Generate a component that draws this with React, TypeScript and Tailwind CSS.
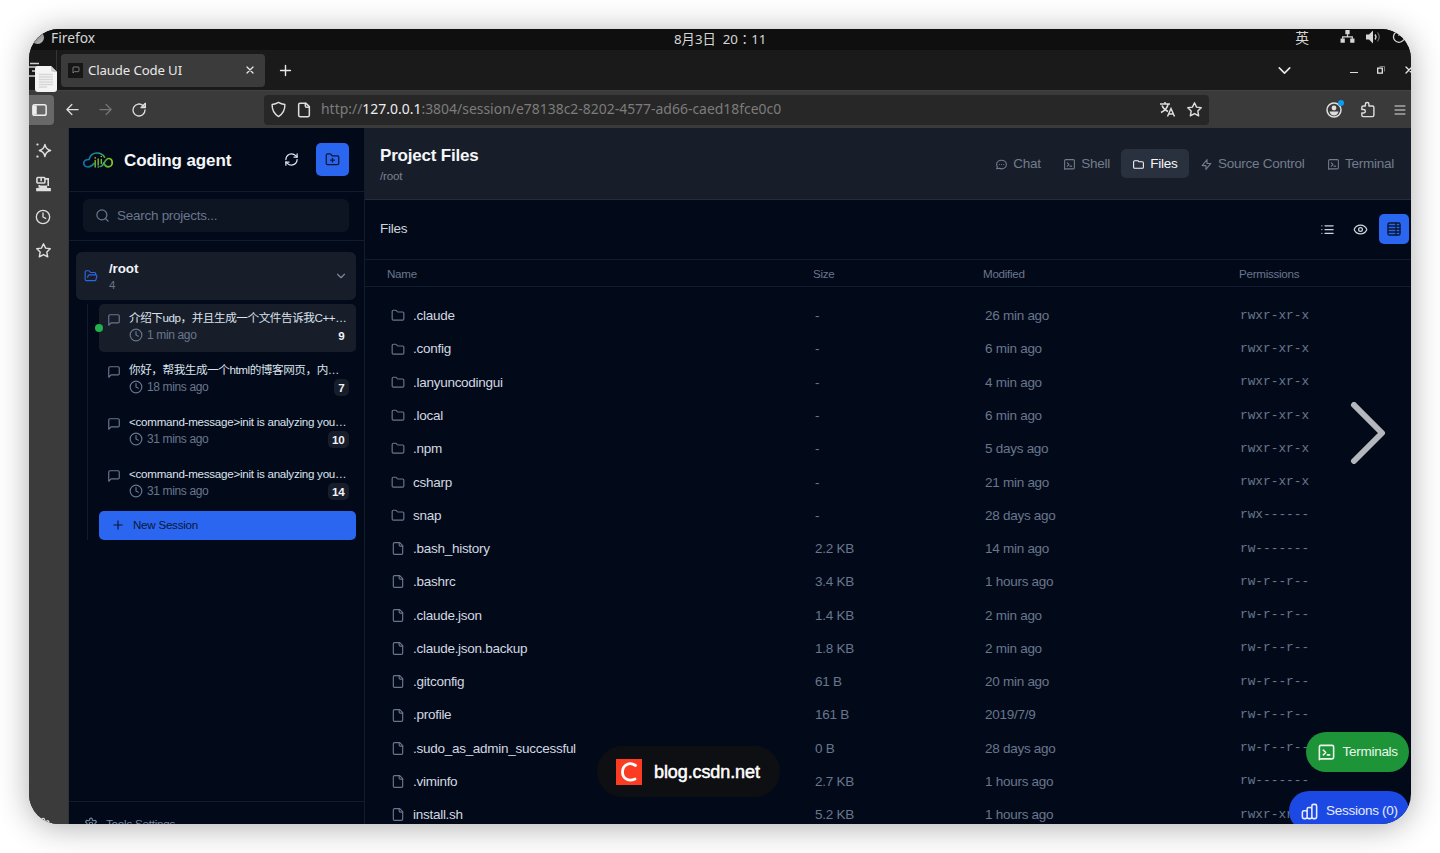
import React, { ReactNode } from "react";

const PATHS = {
	folder: ["M20 20a2 2 0 0 0 2-2V8a2 2 0 0 0-2-2h-7.9a2 2 0 0 1-1.69-.9L9.6 3.9A2 2 0 0 0 7.93 3H4a2 2 0 0 0-2 2v13a2 2 0 0 0 2 2Z"],
	folderPlus: [
		"M20 20a2 2 0 0 0 2-2V8a2 2 0 0 0-2-2h-7.9a2 2 0 0 1-1.69-.9L9.6 3.9A2 2 0 0 0 7.93 3H4a2 2 0 0 0-2 2v13a2 2 0 0 0 2 2Z",
		"M12 10v6M9 13h6",
	],
	folderOpen: [
		"m6 14 1.5-2.9A2 2 0 0 1 9.24 10H20a2 2 0 0 1 1.94 2.5l-1.54 6a2 2 0 0 1-1.95 1.5H4a2 2 0 0 1-2-2V5a2 2 0 0 1 2-2h3.9a2 2 0 0 1 1.69.9l.81 1.2a2 2 0 0 0 1.67.9H18a2 2 0 0 1 2 2v2",
	],
	file: ["M15 2H6a2 2 0 0 0-2 2v16a2 2 0 0 0 2 2h12a2 2 0 0 0 2-2V7Z", "M14 2v4a2 2 0 0 0 2 2h4"],
	message: ["M21 15a2 2 0 0 1-2 2H7l-4 4V5a2 2 0 0 1 2-2h14a2 2 0 0 1 2 2z"],
	clock: ["M12 2a10 10 0 1 0 0 20a10 10 0 1 0 0-20z", "M12 6v6l4 2"],
	refresh: [
		"M3 12a9 9 0 0 1 9-9 9.75 9.75 0 0 1 6.74 2.74L21 8",
		"M21 3v5h-5",
		"M21 12a9 9 0 0 1-9 9 9.75 9.75 0 0 1-6.74-2.74L3 16",
		"M8 16H3v5",
	],
	search: ["M11 3a8 8 0 1 0 0 16a8 8 0 1 0 0-16z", "m21 21-4.3-4.3"],
	down: ["m6 9 6 6 6-6"],
	plus: ["M5 12h14M12 5v14"],
	close: ["M18 6 6 18M6 6l12 12"],
	list: ["M3 12h.01M3 18h.01M3 6h.01M8 12h13M8 18h13M8 6h13"],
	eye: [
		"M2.06 12.35a1 1 0 0 1 0-.7 10.75 10.75 0 0 1 19.88 0 1 1 0 0 1 0 .7 10.75 10.75 0 0 1-19.88 0",
		"M12 9a3 3 0 1 0 0 6a3 3 0 1 0 0-6z",
	],
	table: ["M5 3h14a2 2 0 0 1 2 2v14a2 2 0 0 1-2 2H5a2 2 0 0 1-2-2V5a2 2 0 0 1 2-2z", "M3 7.5h18M3 12h18M3 16.5h18M15 3v18"],
	chat: [
		"M8 12h.01M12 12h.01M16 12h.01M21 12c0 4.418-4.03 8-9 8a9.863 9.863 0 01-4.255-.949L3 20l1.395-3.72C3.512 15.042 3 13.574 3 12c0-4.418 4.03-8 9-8s9 3.582 9 8z",
	],
	shell: ["M8 9l3 3-3 3m5 0h3M5 20h14a2 2 0 002-2V5a2 2 0 00-2-2H5a2 2 0 00-2 2v16l2-1"],
	tabFolder: ["M3 7v10a2 2 0 002 2h14a2 2 0 002-2V9a2 2 0 00-2-2h-6l-2-2H5a2 2 0 00-2 2z"],
	bolt: ["M13 10V3L4 14h7v7l9-11h-7z"],
	bars: [
		"M9 19v-6a2 2 0 00-2-2H5a2 2 0 00-2 2v6a2 2 0 002 2h2a2 2 0 002-2zm0 0V9a2 2 0 012-2h2a2 2 0 012 2v10m-6 0a2 2 0 002 2h2a2 2 0 002-2m0 0V5a2 2 0 012-2h2a2 2 0 012 2v14a2 2 0 01-2 2h-2a2 2 0 01-2-2z",
	],
	left: ["M21 12H3M11 4l-8 8 8 8"],
	right: ["M3 12h18M13 4l8 8-8 8"],
	reload: ["M21 12a9 9 0 1 1-3-6.7L20.5 7.5", "M21.5 2v6.5H15z"],
	shield: ["M12 2c3 1.8 5.5 2.5 9 3c.3 7-2 12.5-9 17c-7-4.5-9.3-10-9-17c3.5-.5 6-1.2 9-3z"],
	star: ["M12 2.5l2.9 6.1 6.6.9-4.8 4.7 1.2 6.7-5.9-3.2-5.9 3.2 1.2-6.7L2.5 9.5l6.600-.9z"],
	puzzle: ["M9 7V4.5a2.500 2.500 0 0 1 5 0V7h5a2 2 0 0 1 2 2v11a2 2 0 0 1-2 2H6a2 2 0 0 1-2-2v-3h2.500a2.300 2.300 0 0 0 0-5H4V9a2 2 0 0 1 2-2z"],
	menu: ["M2 4h20M2 12h20M2 20h20"],
	sparkle: ["M14 3.5c1 5.500 3 7.500 8 8.500c-5 1-7 3-8 8.500c-1-5.500-3-7.500-8-8.500c5-1 7-3 8-8.500z", "M3 3v1h1V3zM3 20v1h1v-1z"],
	settings: [
		"M12.22 2h-.44a2 2 0 0 0-2 2v.18a2 2 0 0 1-1 1.73l-.43.25a2 2 0 0 1-2 0l-.15-.08a2 2 0 0 0-2.73.73l-.22.38a2 2 0 0 0 .73 2.73l.15.1a2 2 0 0 1 1 1.72v.51a2 2 0 0 1-1 1.74l-.15.09a2 2 0 0 0-.73 2.73l.22.38a2 2 0 0 0 2.73.73l.15-.08a2 2 0 0 1 2 0l.43.25a2 2 0 0 1 1 1.73V20a2 2 0 0 0 2 2h.44a2 2 0 0 0 2-2v-.18a2 2 0 0 1 1-1.73l.43-.25a2 2 0 0 1 2 0l.15.08a2 2 0 0 0 2.73-.73l.22-.39a2 2 0 0 0-.73-2.73l-.15-.08a2 2 0 0 1-1-1.74v-.5a2 2 0 0 1 1-1.74l.15-.09a2 2 0 0 0 .73-2.73l-.22-.38a2 2 0 0 0-2.73-.73l-.15.08a2 2 0 0 1-2 0l-.43-.25a2 2 0 0 1-1-1.73V4a2 2 0 0 0-2-2z",
		"M12 9a3 3 0 1 0 0 6a3 3 0 1 0 0-6z",
	],
};

type IconName = keyof typeof PATHS;

function Icon({ name, className = "", stroke = 2 }: { name: IconName; className?: string; stroke?: number }) {
	return (
		<svg
			viewBox="0 0 24 24"
			fill="none"
			stroke="currentColor"
			strokeWidth={stroke}
			strokeLinecap="round"
			strokeLinejoin="round"
			className={`shrink-0 ${className}`}
		>
			{PATHS[name].map((d) => (
				<path key={d} d={d} />
			))}
		</svg>
	);
}

const FILES: [string, string, string, string][] = [
	[".claude", "-", "26 min ago", "rwxr-xr-x"],
	[".config", "-", "6 min ago", "rwxr-xr-x"],
	[".lanyuncodingui", "-", "4 min ago", "rwxr-xr-x"],
	[".local", "-", "6 min ago", "rwxr-xr-x"],
	[".npm", "-", "5 days ago", "rwxr-xr-x"],
	["csharp", "-", "21 min ago", "rwxr-xr-x"],
	["snap", "-", "28 days ago", "rwx------"],
	[".bash_history", "2.2 KB", "14 min ago", "rw-------"],
	[".bashrc", "3.4 KB", "1 hours ago", "rw-r--r--"],
	[".claude.json", "1.4 KB", "2 min ago", "rw-r--r--"],
	[".claude.json.backup", "1.8 KB", "2 min ago", "rw-r--r--"],
	[".gitconfig", "61 B", "20 min ago", "rw-r--r--"],
	[".profile", "161 B", "2019/7/9", "rw-r--r--"],
	[".sudo_as_admin_successful", "0 B", "28 days ago", "rw-r--r--"],
	[".viminfo", "2.7 KB", "1 hours ago", "rw-------"],
	["install.sh", "5.2 KB", "1 hours ago", "rwxr-xr-x"],
];

const SESSIONS = [
	{ title: "介绍下udp，并且生成一个文件告诉我C++…", time: "1 min ago", count: 9, active: true, cjk: true },
	{ title: "你好，帮我生成一个html的博客网页，内…", time: "18 mins ago", count: 7, cjk: true },
	{ title: "<command-message>init is analyzing you…", time: "31 mins ago", count: 10 },
	{ title: "<command-message>init is analyzing you…", time: "31 mins ago", count: 14 },
];

const TABS: { icon: IconName; label: string; active?: boolean }[] = [
	{ icon: "chat", label: "Chat" },
	{ icon: "shell", label: "Shell" },
	{ icon: "tabFolder", label: "Files", active: true },
	{ icon: "bolt", label: "Source Control" },
	{ icon: "shell", label: "Terminal" },
];

function SystemBar() {
	return (
		<div className="relative flex h-[21px] shrink-0 items-center bg-[#0f0f0f] text-[13.8px] leading-none text-[#d6d6d6]">
			<span className="ml-[2px] h-[13px] w-[13px] -translate-y-[2px] rounded-full bg-linear-to-br from-[#555] to-[#ccc]" />
			<span className="ml-[7px] -translate-y-[2px]">Firefox</span>
			<span className="absolute left-[645px] top-[4px] whitespace-pre text-[13.3px]">8月3日  20∶11</span>
			<span className="ml-auto -translate-y-[2px]">英</span>
			<svg viewBox="0 0 15 14" className="ml-[31px] h-[13px] w-[15px] -translate-y-[3px]" fill="currentColor">
				<path d="M5.2 0h4.6v4.6H5.2zM0 9.2h4.600v4.600H0zM10.400 9.200H15v4.600h-4.600z" />
				<path d="M7.500 4.500v3M2.300 9.500V7.300h10.400v2.200" fill="none" stroke="currentColor" strokeWidth="1.3" />
			</svg>
			<svg viewBox="0 0 15 14" className="ml-[11px] h-[14px] w-[15px] -translate-y-[3px]" fill="none" stroke="currentColor">
				<path d="M0 4.500h3l4-4v13l-4-4H0z" fill="currentColor" stroke="none" />
				<path d="M9 4.500q2 2.500 0 5" strokeWidth="1.3" />
				<path d="M11.500 2.500q3.500 4.500 0 9" strokeWidth="1.1" opacity=".5" />
			</svg>
			<svg viewBox="0 0 14 14" className="ml-[11px] mr-[5px] h-[14px] w-[14px] -translate-y-[3px]" fill="none" stroke="currentColor" strokeWidth="1.3">
				<path d="M4 2.200a5.500 5.500 0 1 0 6 0M7 0v6" />
			</svg>
		</div>
	);
}

function TabStrip() {
	return (
		<div className="flex h-[40px] shrink-0 items-center bg-[#1a1a1a] text-[#e8e8e8]">
			<div className="h-full w-[28px] shrink-0 border-r border-[#353535]">
				<svg viewBox="0 0 14 18" className="mt-[11px] h-[18px] w-[14px]" fill="none" stroke="#cfcfcf" strokeWidth="1.5">
					<path d="M1 2.500h9M0 6h10q2 0 2 2v7H0M3 10h5" />
				</svg>
			</div>
			<div className="ml-[4px] flex h-[33px] w-[204px] items-center rounded bg-[#3b3b3b] pl-[7px] pr-[9px]">
				<span className="flex h-[15px] w-[15px] items-center justify-center bg-[#161616]">
					<Icon name="message" className="h-[8px] w-[8px] text-[#aaa]" />
				</span>
				<span className="ml-[5px] pt-[1px] text-[13.2px] tracking-[-0.12px]">Claude Code UI</span>
				<Icon name="close" stroke={2.5} className="ml-auto h-[12px] w-[12px]" />
			</div>
			<Icon name="plus" className="ml-[12px] h-[17px] w-[17px]" />
			<Icon name="down" stroke={1.8} className="ml-auto h-[21px] w-[21px]" />
			<span className="ml-[55px] mt-[5px] h-px w-[8px] bg-[#ddd]" />
			<svg viewBox="0 0 8 8" className="ml-[19px] h-[8px] w-[8px]" fill="none" stroke="currentColor">
				<path d="M.7 2.200h4.600v5H.7z" strokeWidth="1.3" />
				<path d="M2.500.5h5v5" strokeWidth=".8" opacity=".6" />
			</svg>
			<Icon name="close" stroke={2.5} className="-mr-[4px] ml-[18px] h-[12px] w-[12px]" />
		</div>
	);
}

function NavBar() {
	return (
		<div className="flex h-[38px] shrink-0 items-center border-t border-[#424242] bg-[#3a3a3a] text-[#dedede]">
			<div className="flex h-[30px] w-[25px] items-center rounded-r bg-[#686868]">
				<svg viewBox="0 0 16 13" className="ml-[3px] h-[12px] w-[15px]" fill="none" stroke="#eee" strokeWidth="1.6">
					<rect x=".8" y=".8" width="14.4" height="11.4" rx="2" />
					<path d="M1 1.500h4v10H1z" fill="#eee" stroke="none" />
				</svg>
			</div>
			<Icon name="left" className="ml-[11px] h-[15px] w-[15px]" />
			<Icon name="right" className="ml-[18px] h-[15px] w-[15px] text-[#757575]" />
			<Icon name="reload" className="ml-[18px] h-[16px] w-[16px]" />
			<div className="ml-[117px] flex h-[30px] w-[945px] items-center rounded bg-[#272727]">
				<Icon name="shield" className="ml-[6px] h-[17px] w-[17px]" />
				<Icon name="file" stroke={2.3} className="ml-[9px] h-[16px] w-[16px]" />
				<span className="ml-[9px] whitespace-nowrap text-[13.95px] text-[#7c7c7c]">
					http://<span className="text-[#ededed]">127.0.0.1</span>:3804/session/e78138c2-8202-4577-ad66-caed18fce0c0
				</span>
				<svg viewBox="0 0 16 15" className="ml-auto h-[15px] w-[16px]" fill="none" stroke="currentColor" strokeWidth="1.5">
					<path d="M0 2h10M5 0v2M2 3.500q1.500 4 6 6M8 2.500q-1 5-7 8M7.500 14.500 11 6.500l3.500 8M8.800 12h4.500" />
				</svg>
				<Icon name="star" className="ml-[10px] mr-[6px] h-[17px] w-[17px]" />
			</div>
			<div className="relative ml-[117px]">
				<svg viewBox="0 0 16 16" className="h-[16px] w-[16px]" fill="none" stroke="currentColor" strokeWidth="1.5">
					<circle cx="8" cy="8" r="7" />
					<circle cx="8" cy="6" r="2.4" fill="currentColor" stroke="none" />
					<path d="M3.500 9.500h9q-1 4-4.500 4t-4.500-4z" fill="currentColor" stroke="none" />
				</svg>
				<span className="absolute -right-[2px] -top-[2px] h-[6px] w-[6px] rounded-full bg-[#0d9bf2]" />
			</div>
			<Icon name="puzzle" className="ml-[17px] h-[17px] w-[17px]" />
			<Icon name="menu" className="ml-[18px] h-[12px] w-[12px]" />
		</div>
	);
}

function BrowserRail() {
	return (
		<div className="flex w-[40px] shrink-0 flex-col items-start border-r border-[#333] bg-[#3b3b3b] pl-[6px] pt-[14px] text-[#dedede]">
			<Icon name="sparkle" className="h-[17px] w-[17px]" />
			<svg viewBox="0 0 16 16" className="ml-px mt-[17px] h-[16px] w-[15px]" fill="none" stroke="currentColor" strokeWidth="1.7">
				<rect x="1" y="1" width="8.5" height="6" rx="1" />
				<path d="M9.500 2.500h3.500V10M5.500 1v4M3.500 9v3" />
				<path d="M1 13.200h14v1.600H1zM5 10.500h6V13H5z" fill="currentColor" />
			</svg>
			<Icon name="clock" className="mt-[17px] h-[16px] w-[16px]" />
			<Icon name="star" className="mt-[17px] h-[17px] w-[17px]" />
			<Icon name="settings" className="mb-[-9px] mt-auto h-[16px] w-[16px]" />
		</div>
	);
}

function CloudLogo() {
	return (
		<svg
			viewBox="0 0 30 17"
			className="h-[17px] w-[30px] translate-y-px"
			fill="none"
			strokeWidth="1.7"
			strokeLinecap="round"
			strokeLinejoin="round"
		>
			<defs>
				<linearGradient id="cloud" x1="0" x2="30" y1="0" y2="0" gradientUnits="userSpaceOnUse">
					<stop stopColor="#1667ad" />
					<stop offset=".55" stopColor="#1c9a86" />
					<stop offset=".8" stopColor="#5fb52a" />
					<stop offset="1" stopColor="#8fcc1c" />
				</linearGradient>
			</defs>
			<g stroke="url(#cloud)">
				<path d="M11 11.500C9 14 7.500 15 5 15C2 15 .8 13 .8 11.300C.8 9 2.700 7.500 6 7.500C7 3.500 10 1 14 1C17.500 1 20 2.500 21.500 5.200" />
				<path d="M17 14.500C21 15 21.500 6.500 25.500 6.500C28 6.500 29.200 8.500 29.200 10.700C29.200 13 27.500 14.800 25 14.800C22.500 14.800 21.500 13 20.500 11" />
			</g>
			<path d="M12.200 8.500v6.500M15.200 7v6M18.300 7.500v4" stroke="#7fb92a" strokeWidth="1.4" />
			<path d="M12.200 5.800v.1M15.200 15v.1M18.300 4.500v.1" stroke="#c7b52b" strokeWidth="1.5" />
		</svg>
	);
}

function Sidebar() {
	return (
		<aside className="flex w-[296px] shrink-0 flex-col border-r border-[#131c2c]">
			<div className="flex h-[64px] shrink-0 items-center border-b border-[#131c2c] pl-[14px] pr-[15px]">
				<CloudLogo />
				<h1 className="ml-[11px] pt-[2px] text-[17px] font-bold tracking-[-0.11px] text-[#f5f7fa]">Coding agent</h1>
				<Icon name="refresh" className="ml-auto h-[15px] w-[15px] text-[#e2e6ee]" />
				<button className="ml-[17px] flex h-[33px] w-[33px] items-center justify-center rounded-[5px] bg-[#2b66f1] text-[#0b1733]">
					<Icon name="folderPlus" className="h-[15px] w-[15px]" />
				</button>
			</div>
			<div className="flex h-[49px] shrink-0 items-center border-b border-[#131c2c] pb-[1px] pl-[14px] pr-[15px]">
				<div className="flex h-[33px] w-full items-center rounded-[6px] bg-[#0d1422] pl-[12px] text-[#69768c]">
					<Icon name="search" className="h-[15px] w-[15px]" />
					<span className="ml-[7px] pt-[1px] text-[13.5px] tracking-[-0.27px]">Search projects...</span>
				</div>
			</div>
			<div className="flex flex-1 flex-col pl-[7px] pr-[8px] pt-[11px]">
				<div className="flex h-[48px] items-center rounded-[6px] bg-[#171e2a] pl-[8px] pr-[8px]">
					<Icon name="folderOpen" className="h-[14px] w-[14px] text-[#2b66e6]" />
					<div className="ml-[11px]">
						<p className="text-[13.4px] font-bold leading-[17px] tracking-[-0.1px] text-[#f1f3f7]">/root</p>
						<p className="text-[11.5px] leading-[16px] text-[#69768c]">4</p>
					</div>
					<Icon name="down" className="ml-auto h-[14px] w-[14px] text-[#7d899d]" />
				</div>
				<div className="ml-[11px] mt-[4px] flex flex-col gap-[4px] border-l border-[#131c2c] pl-[11px]">
					{SESSIONS.map((session, i) => (
						<SessionItem key={i} {...session} />
					))}
					<button className="-mt-[1px] flex h-[29px] items-center rounded-[5px] bg-[#2b66f1] pb-px pl-[12px] text-[11.6px] tracking-[-0.25px] text-[#0b1733]">
						<Icon name="plus" className="h-[14px] w-[14px]" />
						<span className="ml-[8px]">New Session</span>
					</button>
				</div>
			</div>
			<div className="flex h-[23px] shrink-0 items-start border-t border-[#131c2c] pl-[15px] pt-[14px] text-[#77849a]">
				<Icon name="settings" className="mt-[1px] h-[14px] w-[14px]" />
				<span className="ml-[8px] text-[11.6px] leading-[16px] tracking-[-0.22px]">Tools Settings</span>
			</div>
		</aside>
	);
}

function SessionItem({ title, time, count, active, cjk }: { title: string; time: string; count: number; active?: boolean; cjk?: boolean }) {
	return (
		<div className={`relative flex h-[48px] rounded-[5px] pl-[8px] pr-[8px] pt-[5px] ${active ? "bg-[#171e2a]" : ""}`}>
			{active && <span className="absolute -left-[4px] top-[20px] h-[8px] w-[8px] rounded-full bg-[#23b14d]" />}
			<Icon name="message" className="mt-[4px] h-[14px] w-[14px] text-[#69768c]" />
			<div className="ml-[8px] min-w-0 flex-1">
				<p
					className={`whitespace-nowrap text-[11.6px] leading-[17px] text-[#dde2ea] ${
						cjk ? "tracking-[-0.43px]" : "tracking-[-0.26px]"
					}`}
				>
					{title}
				</p>
				<div className="flex h-[18px] items-center text-[#69768c]">
					<Icon name="clock" className="h-[14px] w-[14px]" />
					<span className="ml-[4px] text-[12px] tracking-[-0.36px]">{time}</span>
					<span className="-mr-[1px] ml-auto rounded-[5px] bg-[#171e2a] px-[4.5px] text-[11.6px] font-bold leading-[17px] tracking-[-0.2px] text-[#f1f3f7]">
						{count}
					</span>
				</div>
			</div>
		</div>
	);
}

function HeaderCells({ children }: { children: ReactNode }) {
	return (
		<div className="grid h-[27px] shrink-0 grid-cols-[426px_170px_256px_1fr] items-center border-b border-[#131c2c] pl-[22px] pt-[2px] text-[11.6px] tracking-[-0.26px] text-[#69768c]">
			{children}
		</div>
	);
}

function FilesPanel() {
	return (
		<main className="flex min-w-0 flex-1 flex-col">
			<header className="flex h-[72px] shrink-0 items-center border-b border-[#232c3a] bg-[#171e2a] pl-[15px] pr-[6px]">
				<div className="pt-[2px]">
					<h2 className="text-[17px] font-bold leading-[22px] tracking-[-0.2px] text-[#f5f7fa]">Project Files</h2>
					<p className="text-[11.6px] leading-[17px] tracking-[-0.2px] text-[#7a8290]">/root</p>
				</div>
				<nav className="ml-auto flex items-center">
					{TABS.map(({ icon, label, active }) => (
						<button
							key={label}
							className={`flex h-[29px] items-center gap-[5.3px] rounded-[5px] px-[11px] pt-px text-[13.5px] tracking-[-0.24px] ${
								active ? "bg-[#29303e] text-[#f5f7fa]" : "text-[#737c8c]"
							}`}
						>
							<Icon name={icon} className="h-[13px] w-[13px]" />
							{label}
						</button>
					))}
				</nav>
			</header>
			<div className="flex h-[60px] shrink-0 items-center border-b border-[#131c2c] pb-[1px] pl-[15px] pr-[2px] text-[#cfd5de]">
				<h3 className="text-[13.5px] tracking-[-0.27px]">Files</h3>
				<Icon name="list" className="ml-auto h-[15px] w-[15px]" />
				<Icon name="eye" className="ml-[18px] h-[15px] w-[15px]" />
				<button className="ml-[11px] flex h-[30px] w-[30px] items-center justify-center rounded-[5px] bg-[#2b66f1] text-[#0b1733]">
					<Icon name="table" className="h-[16px] w-[16px]" />
				</button>
			</div>
			<HeaderCells>
				<span>Name</span>
				<span>Size</span>
				<span>Modified</span>
				<span>Permissions</span>
			</HeaderCells>
			<div className="pt-[12.7px]">
				{FILES.map(([name, size, modified, permissions]) => (
					<div
						key={name}
						className="grid h-[33.27px] grid-cols-[424px_170px_255px_1fr] items-center pl-[26px] text-[13.5px] tracking-[-0.27px] text-[#69768c]"
					>
						<span className="flex items-center gap-[8px] tracking-[-0.27px] text-[#d3d8e0]">
							<Icon name={size === "-" ? "folder" : "file"} className="h-[14px] w-[14px] -translate-y-[0.5px] text-[#69768c]" />
							{name}
						</span>
						<span>{size}</span>
						<span>{modified}</span>
						<span className="-translate-y-px font-['Liberation_Mono',monospace] text-[12.8px] tracking-normal">{permissions}</span>
					</div>
				))}
			</div>
		</main>
	);
}

export default function App() {
	return (
		<div className="h-[853px] w-[1440px] overflow-hidden bg-white p-[29px]">
			<div className="h-[795px] w-[1382px] rounded-[30px] shadow-[0_3px_32px_rgba(0,0,0,0.32)]">
				<div className="relative flex h-full flex-col overflow-hidden rounded-[30px] bg-[#020a1a] font-['Liberation_Sans','Noto_Sans_CJK_SC',sans-serif]">
					<div className="font-['Noto_Sans','Noto_Sans_CJK_SC',sans-serif]">
						<SystemBar />
						<TabStrip />
						<NavBar />
					</div>
					<div className="flex min-h-0 flex-1">
						<BrowserRail />
						<Sidebar />
						<FilesPanel />
					</div>

					{/* document icon on the desktop edge */}
					<svg viewBox="0 0 22 26" className="absolute left-[6px] top-[37px] h-[26px] w-[22px]">
						<path d="M3 0h13l6 6v17q0 3-3 3H3q-3 0-3-3V3q0-3 3-3z" fill="#f4f4f4" />
						<path d="M16 0v4q0 2 2 2h4z" fill="#cfcfcf" />
						<path d="M4 8.500h14M4 11h14M4 13.500h14M4 16h14M4 18.500h14M4 21h8" stroke="#d6d6d6" strokeWidth="1.5" />
					</svg>

					<svg
						viewBox="0 0 36 62"
						className="absolute left-[1321px] top-[373px] h-[62px] w-[36px]"
						fill="none"
						stroke="#b4b7bc"
						strokeWidth="6"
						strokeLinecap="round"
						strokeLinejoin="round"
					>
						<path d="M4 3l28 28L4 59" />
					</svg>

					<div className="absolute left-[1277px] top-[703px] flex h-[40px] w-[103px] items-center rounded-full bg-[#1e9439] pl-[11px] text-[#e9f7ec]">
						<Icon name="shell" className="h-[19px] w-[19px]" />
						<span className="ml-[6.5px] pt-[1px] text-[13.5px] tracking-[-0.27px]">Terminals</span>
					</div>
					<div className="absolute left-[1260px] top-[762px] flex h-[40px] w-[120px] items-center rounded-full bg-[#1c49e4] pl-[11px] text-[#e6ebfd]">
						<Icon name="bars" className="h-[19px] w-[19px]" />
						<span className="ml-[7px] pt-[1px] text-[13.5px] tracking-[-0.27px]">Sessions (0)</span>
					</div>

					<div className="absolute left-[568px] top-[717px] flex h-[51px] w-[183px] items-center rounded-full bg-[#0e0f12] pl-[19px] text-white">
						<svg viewBox="0 0 26 26" className="h-[26px] w-[26px]">
							<path d="M0 0h26v26H0z" fill="#fb3b22" />
							<path
								d="M19.500 6.500C14 2.500 6.500 5.500 6.500 13s7 9.500 12.500 7"
								fill="none"
								stroke="white"
								strokeWidth="2.8"
								strokeLinecap="round"
							/>
						</svg>
						<span className="ml-[12px] pt-[1px] text-[18px] tracking-[-0.1px] [-webkit-text-stroke:0.5px_white]">blog.csdn.net</span>
					</div>
				</div>
			</div>
		</div>
	);
}
